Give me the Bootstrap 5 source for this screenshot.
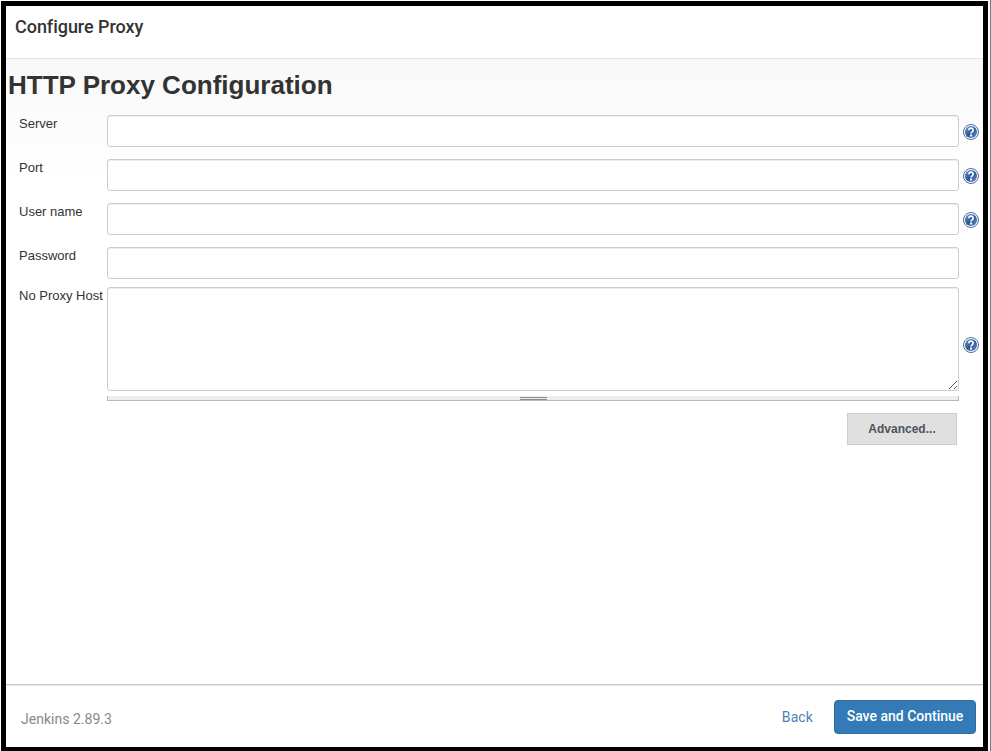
<!DOCTYPE html>
<html lang="en">
<head>
<meta charset="utf-8">
<title>Configure Proxy</title>
<link href="https://cdn.jsdelivr.net/npm/bootstrap@5.3.0/dist/css/bootstrap.min.css" rel="stylesheet">
<style>
body{height:751px;padding:1px 2px 0 1px;background:#fff;overflow:hidden;border-right:1px solid #777;color:#333;font-family:"Liberation Sans",Arial,sans-serif;font-size:13px;line-height:18px}
.frame{border:5px solid #000;border-bottom-width:4px;width:987px;height:750px}
.rb{font-family:Roboto,sans-serif}
.top-bar{height:53px;padding:9px 9px 0;border-bottom:1px solid #e5e5e5}
.top-bar h4{font-size:18px;line-height:24px;font-weight:500;letter-spacing:-.04px}
.pane{background:linear-gradient(#f8f8f8,#fff 120px)}
.pane h1{font-size:26px;line-height:32px;font-weight:700;padding:10px 0 0 2px;letter-spacing:0;height:56px}
.line{height:44px;padding-left:13px}
.line.short{height:40px}
.line.tall{height:104px}
.line label{width:88px;white-space:nowrap}
.line .form-control{width:852px;height:32px;border:1px solid #ccc;border-radius:3px;padding:4px 8px;background:#fff;box-shadow:inset 0 1px 1px rgba(0,0,0,.075)}
.line textarea.form-control{height:104px;resize:none}
.help{width:16px;height:16px;margin:9px 0 0 4px}
.tall .help{margin-top:50px}
.grip{position:absolute;right:2px;bottom:2px;width:8px;height:8px}
.handle{width:852px;height:5px;margin:5px 0 0 101px;padding-top:1px;background:#ededed;border:solid #b9b9ae;border-width:0 1px 1px}
.handle span{width:27px;height:3px;margin:0 auto;border:solid #8a8a8a;border-width:1px 0}
.adv{width:110px;height:32px;margin:12px 26px 0 0;padding:0;border:1px solid #ccc;border-radius:0;background:#e0e0e0;color:#4d545d;font-size:12px;font-weight:700;letter-spacing:.02px}
.foot{height:63px;border-top:1px solid #c8c8c8;box-shadow:inset 0 1px #e9e9e9;padding:2px 7px 0 15px}
.ver{color:#888;font-size:14px;letter-spacing:.02px;padding-top:4px}
.back{color:#4c82b4;font-size:14px;margin-right:21px;margin-top:-1px;letter-spacing:.1px}
.save{width:142px;height:34px;padding:0 0 2px;background:#337ab7;border:1px solid #2e6da4;border-radius:4px;color:#fff;font-size:14px;font-weight:500}
</style>
<script src="https://cdn.jsdelivr.net/npm/bootstrap@5.3.0/dist/js/bootstrap.bundle.min.js"></script>
</head>
<body>
<svg class="position-absolute" width="0" height="0"><defs>
<linearGradient id="blue" x2="1" y2="1"><stop stop-color="#7d9dcd"/><stop offset=".5" stop-color="#2c5796"/><stop offset="1" stop-color="#6c90c6"/></linearGradient>
<symbol id="q" viewBox="0 0 16 16"><circle cx="8" cy="8" r="7.5" fill="#fff" stroke="#4a6ea6"/><circle cx="8" cy="8" r="6.1" fill="url(#blue)"/><path d="M5.9 6.2C5.9 3.4 10.2 3.4 10.2 6.1C10.2 7.8 8 7.8 8 9.5" fill="none" stroke="#fff" stroke-width="1.7"/><path d="M7.1 10.6h1.9v1.8H7.1z" fill="#fff"/></symbol>
</defs></svg>
<div class="frame d-flex flex-column">
  <header class="top-bar rb"><h4 class="m-0">Configure Proxy</h4></header>
  <main class="pane flex-grow-1">
    <h1 class="m-0">HTTP Proxy Configuration</h1>
    <div class="line d-flex align-items-start"><label for="server">Server</label><input id="server" class="form-control"><svg class="help"><use href="#q"/></svg></div>
    <div class="line d-flex align-items-start"><label for="port">Port</label><input id="port" class="form-control"><svg class="help"><use href="#q"/></svg></div>
    <div class="line d-flex align-items-start"><label for="user">User name</label><input id="user" class="form-control"><svg class="help"><use href="#q"/></svg></div>
    <div class="line short d-flex align-items-start"><label for="pass">Password</label><input id="pass" type="password" class="form-control"></div>
    <div class="line tall d-flex align-items-start"><label for="nohost">No Proxy Host</label><div class="position-relative"><textarea id="nohost" class="form-control d-block"></textarea><svg class="grip" viewBox="0 0 8 8"><path d="M0 8l8-8M5 8l3-3" stroke="#555" fill="none"/></svg></div><svg class="help"><use href="#q"/></svg></div>
    <div class="handle"><span class="d-block"></span></div>
    <div class="d-flex justify-content-end"><button class="btn adv">Advanced...</button></div>
  </main>
  <footer class="foot rb d-flex align-items-center">
    <span class="ver me-auto">Jenkins 2.89.3</span>
    <a href="#" class="back text-decoration-none">Back</a>
    <button class="btn save">Save and Continue</button>
  </footer>
</div>
</body>
</html>
